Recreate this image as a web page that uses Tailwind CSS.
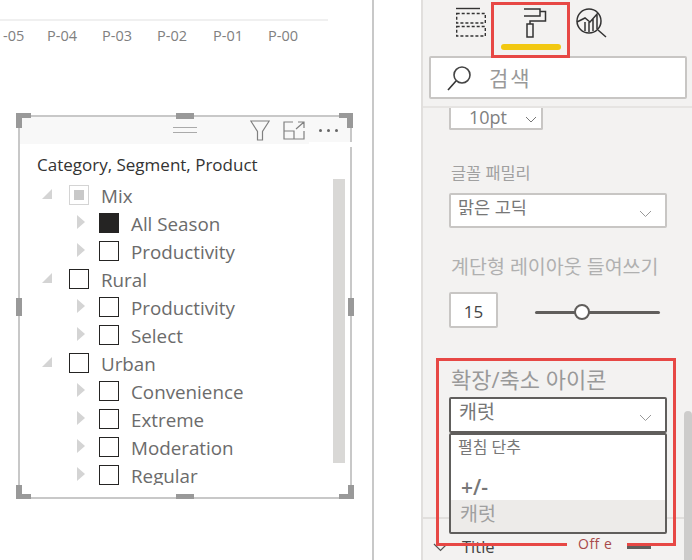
<!DOCTYPE html>
<html lang="ko">
<head>
<meta charset="UTF-8" />
<title>Slicer format</title>
<script src="https://cdn.jsdelivr.net/npm/@tailwindcss/browser@4"></script>
</head>
<body class="bg-white font-['Open_Sans','Noto_Sans_CJK_KR',sans-serif] overflow-hidden">
<div class="relative flex h-[560px] w-[692px] overflow-hidden">

  <!-- Report canvas -->
  <div class="w-[372px] h-full shrink-0 border-r-2 border-[#c8c8c8] box-content">
    <div class="mt-[19px] h-[2px] w-[328px] bg-[#f0f0f0]"></div>
    <div class="mt-[5px] h-[20px] flex text-[14.5px] leading-[20px] text-[#808080] pl-[3px]">
      <span class="w-[44px]">-05</span>
      <span class="w-[55px]">P-04</span>
      <span class="w-[55px]">P-03</span>
      <span class="w-[56px]">P-02</span>
      <span class="w-[55px]">P-01</span>
      <span>P-00</span>
    </div>

    <!-- Slicer -->
    <div class="relative ml-[18px] mt-[69px] w-[334px] h-[384px] border-2 border-[#c8c8c8]">
      <div class="h-[27px] bg-[#f8f8f8] relative">
        <div class="absolute left-[153px] top-[10px] w-[24px] h-[6px] border-y border-[#aaa]"></div>
        <svg class="absolute left-[230px] top-[3px]" width="20" height="21" viewBox="0 0 20 21" fill="none" stroke="#808080" stroke-width="1.200"><path d="M.8 1h18.400l-6.700 10.500V20H7.500v-8.500z"/></svg>
        <svg class="absolute left-[263px] top-[4px]" width="22" height="19" viewBox="0 0 22 19" fill="none" stroke="#808080" stroke-width="1.200"><path d="M10 1H1v17h20v-8M1 10h10v8M13 8l8-7M15 1h6v6"/></svg>
        <div class="absolute left-[299px] top-[12px] flex gap-[5px]">
          <span class="size-[3px] rounded-full bg-[#666]"></span><span class="size-[3px] rounded-full bg-[#666]"></span><span class="size-[3px] rounded-full bg-[#666]"></span>
        </div>
      </div>
      <div class="absolute left-[289px] top-[25px] w-[43px] h-[5px] bg-white"></div>
      <div class="pl-[17px] pt-[9px] h-[33px] text-[17px] leading-[24px] text-[#333]">Category, Segment, Product</div>

      <div class="absolute left-[313px] top-[62px] w-[12px] h-[284px] bg-[#d9d8d6]"></div>

      <div class="h-[308px] overflow-hidden pt-[5px] text-[18.8px] leading-[28px] text-[#6b6b6b] relative">
        <div class="flex items-center h-[28px] pl-[22px]"><svg width="10" height="10" viewBox="0 0 10 10" class="mr-[17px] -mt-[4px]"><path d="M10 0v10H0z" fill="#d4d4d4"/></svg><span class="size-[20px] -mt-[2px] border border-[#d4d4d4] flex items-center justify-center mr-[12px]"><span class="size-[10px] bg-[#c8c8c8]"></span></span>Mix</div>
        <div class="flex items-center h-[28px] pl-[57px]"><svg width="8" height="14" viewBox="0 0 8 14" class="mr-[14px] -mt-[5px]"><path d="M0 0l8 7-8 7z" fill="#d4d4d4"/></svg><span class="size-[20px] -mt-[2px] bg-[#252423] mr-[12px]"></span>All Season</div>
        <div class="flex items-center h-[28px] pl-[57px]"><svg width="8" height="14" viewBox="0 0 8 14" class="mr-[14px] -mt-[5px]"><path d="M0 0l8 7-8 7z" fill="#d4d4d4"/></svg><span class="size-[20px] -mt-[2px] border border-[#252423] mr-[12px]"></span>Productivity</div>
        <div class="flex items-center h-[28px] pl-[22px]"><svg width="10" height="10" viewBox="0 0 10 10" class="mr-[17px] -mt-[4px]"><path d="M10 0v10H0z" fill="#d4d4d4"/></svg><span class="size-[20px] -mt-[2px] border border-[#252423] mr-[12px]"></span>Rural</div>
        <div class="flex items-center h-[28px] pl-[57px]"><svg width="8" height="14" viewBox="0 0 8 14" class="mr-[14px] -mt-[5px]"><path d="M0 0l8 7-8 7z" fill="#d4d4d4"/></svg><span class="size-[20px] -mt-[2px] border border-[#252423] mr-[12px]"></span>Productivity</div>
        <div class="flex items-center h-[28px] pl-[57px]"><svg width="8" height="14" viewBox="0 0 8 14" class="mr-[14px] -mt-[5px]"><path d="M0 0l8 7-8 7z" fill="#d4d4d4"/></svg><span class="size-[20px] -mt-[2px] border border-[#252423] mr-[12px]"></span>Select</div>
        <div class="flex items-center h-[28px] pl-[22px]"><svg width="10" height="10" viewBox="0 0 10 10" class="mr-[17px] -mt-[4px]"><path d="M10 0v10H0z" fill="#d4d4d4"/></svg><span class="size-[20px] -mt-[2px] border border-[#252423] mr-[12px]"></span>Urban</div>
        <div class="flex items-center h-[28px] pl-[57px]"><svg width="8" height="14" viewBox="0 0 8 14" class="mr-[14px] -mt-[5px]"><path d="M0 0l8 7-8 7z" fill="#d4d4d4"/></svg><span class="size-[20px] -mt-[2px] border border-[#252423] mr-[12px]"></span>Convenience</div>
        <div class="flex items-center h-[28px] pl-[57px]"><svg width="8" height="14" viewBox="0 0 8 14" class="mr-[14px] -mt-[5px]"><path d="M0 0l8 7-8 7z" fill="#d4d4d4"/></svg><span class="size-[20px] -mt-[2px] border border-[#252423] mr-[12px]"></span>Extreme</div>
        <div class="flex items-center h-[28px] pl-[57px]"><svg width="8" height="14" viewBox="0 0 8 14" class="mr-[14px] -mt-[5px]"><path d="M0 0l8 7-8 7z" fill="#d4d4d4"/></svg><span class="size-[20px] -mt-[2px] border border-[#252423] mr-[12px]"></span>Moderation</div>
        <div class="flex items-center h-[28px] pl-[57px]"><svg width="8" height="14" viewBox="0 0 8 14" class="mr-[14px] -mt-[5px]"><path d="M0 0l8 7-8 7z" fill="#d4d4d4"/></svg><span class="size-[20px] -mt-[2px] border border-[#252423] mr-[12px]"></span>Regular</div>
      </div>

      <!-- Resize handles -->
      <div class="absolute -left-[4px] -top-[4px] w-[15px] h-[5px] bg-[#999]"></div>
      <div class="absolute -left-[4px] -top-[4px] w-[6px] h-[15px] bg-[#999]"></div>
      <div class="absolute -right-[3px] -top-[4px] w-[14px] h-[5px] bg-[#999]"></div>
      <div class="absolute -right-[3px] -top-[4px] w-[6px] h-[15px] bg-[#999]"></div>
      <div class="absolute -left-[4px] -bottom-[2px] w-[15px] h-[5px] bg-[#999]"></div>
      <div class="absolute -left-[4px] -bottom-[2px] w-[6px] h-[14px] bg-[#999]"></div>
      <div class="absolute -right-[4px] -bottom-[2px] w-[15px] h-[5px] bg-[#999]"></div>
      <div class="absolute -right-[4px] -bottom-[2px] w-[6px] h-[14px] bg-[#999]"></div>
      <div class="absolute left-[156px] -top-[4px] w-[18px] h-[6px] bg-[#999]"></div>
      <div class="absolute left-[156px] -bottom-[2px] w-[18px] h-[5px] bg-[#999]"></div>
      <div class="absolute -left-[4px] top-[181px] w-[6px] h-[18px] bg-[#999]"></div>
      <div class="absolute -right-[4px] top-[181px] w-[6px] h-[18px] bg-[#999]"></div>
    </div>
  </div>

  <div class="w-[47px] shrink-0"></div>

  <!-- Format pane -->
  <div class="relative flex-1 h-full bg-[#f3f2f1] border-l-2 border-[#e1dfdd]">
    <div class="h-[56px] relative">
      <svg class="absolute left-[33px] top-[7px]" width="30" height="30" viewBox="0 0 30 30" fill="none" stroke="#333" stroke-width="1.400"><path d="M0 1.500h24"/><path stroke-dasharray="3 2" d="M.7 6.500h28.600v9.500H.7zM.7 19.500h28.600V29H.7z"/></svg>
      <svg class="absolute left-[99px] top-[6px]" width="26" height="34" viewBox="0 0 26 34" fill="none" stroke="#333" stroke-width="1.500"><path d="M2 3h16v7H2M18 5.500h5.500V15H8v3"/><rect x="5" y="18" width="6" height="13"/></svg>
      <svg class="absolute left-[153px] top-[7px]" width="32" height="31" viewBox="0 0 32 31" fill="none" stroke="#333" stroke-width="1.500"><circle cx="13" cy="14" r="12"/><path d="M22 23l8 7M1 15l8-4 5 4 8-9M9 15v9M13 15v10M17 12v12M21 8v14"/></svg>
    </div>

    <!-- Search -->
    <div class="ml-[6px] w-[258px] h-[43px] bg-white border-2 border-[#c8c6c4] rounded-[2px] flex items-center pl-[15px]">
      <svg width="26" height="30" viewBox="0 0 26 30" fill="none" stroke-width="1.600"><circle cx="16" cy="12" r="8" stroke="#444"/><path d="M10 18L2 27" stroke="#333"/></svg>
      <span class="ml-[17px] text-[21px] leading-[28px] text-[#999] tracking-[2px]">검색</span>
    </div>
    <div class="mt-[7px] h-[2px] bg-[#e6e4e2]"></div>

    <!-- Font size -->
    <div class="ml-[26px] w-[94px] h-[22px] bg-white border-2 border-t-0 border-[#c8c6c4] rounded-b-[2px] flex items-end justify-between pl-[18px] pr-[4px]">
      <span class="text-[18px] leading-[22px] text-[#808080]">10pt</span>
      <svg class="mb-[4px]" width="12" height="8" viewBox="0 0 12 8" fill="none" stroke="#777"><path d="M1 1l5 5 5-5"/></svg>
    </div>

    <div class="ml-[28px] mt-[31px] h-[24px] text-[16.4px] leading-[24px] text-[#a0a0a0]">글꼴 패밀리</div>
    <div class="ml-[26px] mt-[8px] w-[218px] h-[35px] bg-white border-2 border-[#c8c6c4] rounded-[2px] flex justify-between pl-[7px] pr-[13px]">
      <span class="text-[17.500px] leading-[24px] text-[#777]">맑은 고딕</span>
      <svg class="mt-[15px]" width="13" height="8" viewBox="0 0 13 8" fill="none" stroke="#999"><path d="M1 1l5.500 5.500L12 1"/></svg>
    </div>

    <div class="ml-[28px] mt-[25px] h-[28px] text-[19.500px] leading-[28px] text-[#b0b0b0] whitespace-nowrap">계단형 레이아웃 들여쓰기</div>
    <div class="ml-[26px] mt-[11px] flex items-center">
      <div class="w-[49px] h-[36px] bg-white border-2 border-[#c8c6c4] rounded-[2px] flex items-center justify-center pt-[3px] text-[17px] text-[#444]">15</div>
      <div class="relative ml-[37px] mt-[4px] w-[125px] h-[3px] bg-[#605e5c] rounded-full">
        <span class="absolute left-[39px] -top-[7px] size-[16px] rounded-full bg-white border-2 border-[#605e5c]"></span>
      </div>
    </div>

    <div class="ml-[28px] mt-[37px] h-[28px] text-[22px] leading-[28px] text-[#999] whitespace-nowrap">확장/축소 아이콘</div>
    <div class="ml-[26px] mt-[4px] w-[218px] h-[36px] bg-white border-2 border-[#605e5c] rounded-[2px] flex justify-between pl-[8px] pr-[13px]">
      <span class="text-[19.500px] leading-[26px] text-[#777]">캐럿</span>
      <svg class="mt-[15px]" width="13" height="8" viewBox="0 0 13 8" fill="none" stroke="#999"><path d="M1 1l5.500 5.500L12 1"/></svg>
    </div>
    <div class="relative z-10 ml-[26px] w-[218px] h-[101px] bg-white border-2 border-[#605e5c] rounded-[2px]">
      <div class="pl-[7px] h-[24px] text-[16px] leading-[24px] text-[#777]">펼침 단추</div>
      <div class="pl-[10px] mt-[16px] h-[25px] text-[21px] font-semibold leading-[25px] text-[#777]">+/-</div>
      <div class="h-[32px] pl-[9px] bg-[#edebe9] text-[19.500px] leading-[28px] text-[#a0a0a0]">캐럿</div>
    </div>

    <div class="absolute left-0 right-0 top-[517px] h-[2px] bg-[#e1dfdd]"></div>
    <div class="absolute left-[10px] top-[537px] h-[20px] flex items-center w-[220px]">
      <svg width="15" height="9" viewBox="0 0 15 9" fill="none" stroke="#555" stroke-width="1.200"><path d="M1 1l6.500 6.500L14 1"/></svg>
      <span class="ml-[14px] text-[16.500px] text-[#444]">Title</span>
    </div>
    <span class="absolute left-[155px] top-[535px] text-[14px] leading-[18px] tracking-[0.5px] text-[#a84a4a]">Off e</span>
    <div class="absolute left-[204px] top-[546px] w-[24px] h-[3px] bg-[#605e5c]"></div>

    <!-- Pane scrollbar -->
    <div class="absolute right-0 top-[411px] bottom-0 w-[8px] bg-[#cdcccb] rounded-t-[4px]"></div>
  </div>

  <!-- Red callouts -->
  <div class="absolute left-[491px] top-[2px] w-[79px] h-[56px] border-[3px] border-[#e74845]"></div>
  <div class="absolute left-[501px] top-[44px] w-[60px] h-[6px] rounded-full bg-[#f2c811]"></div>
  <div class="absolute left-[436px] top-[358px] w-[240px] h-[3px] bg-[#e74845]"></div>
  <div class="absolute left-[436px] top-[358px] w-[3px] h-[188px] bg-[#e74845]"></div>
  <div class="absolute left-[673px] top-[358px] w-[3px] h-[188px] bg-[#e74845]"></div>
  <div class="absolute left-[436px] top-[543px] w-[131px] h-[3px] bg-[#e74845]"></div>
  <div class="absolute left-[627px] top-[543px] w-[49px] h-[3px] bg-[#e74845]"></div>
</div>
</body>
</html>
